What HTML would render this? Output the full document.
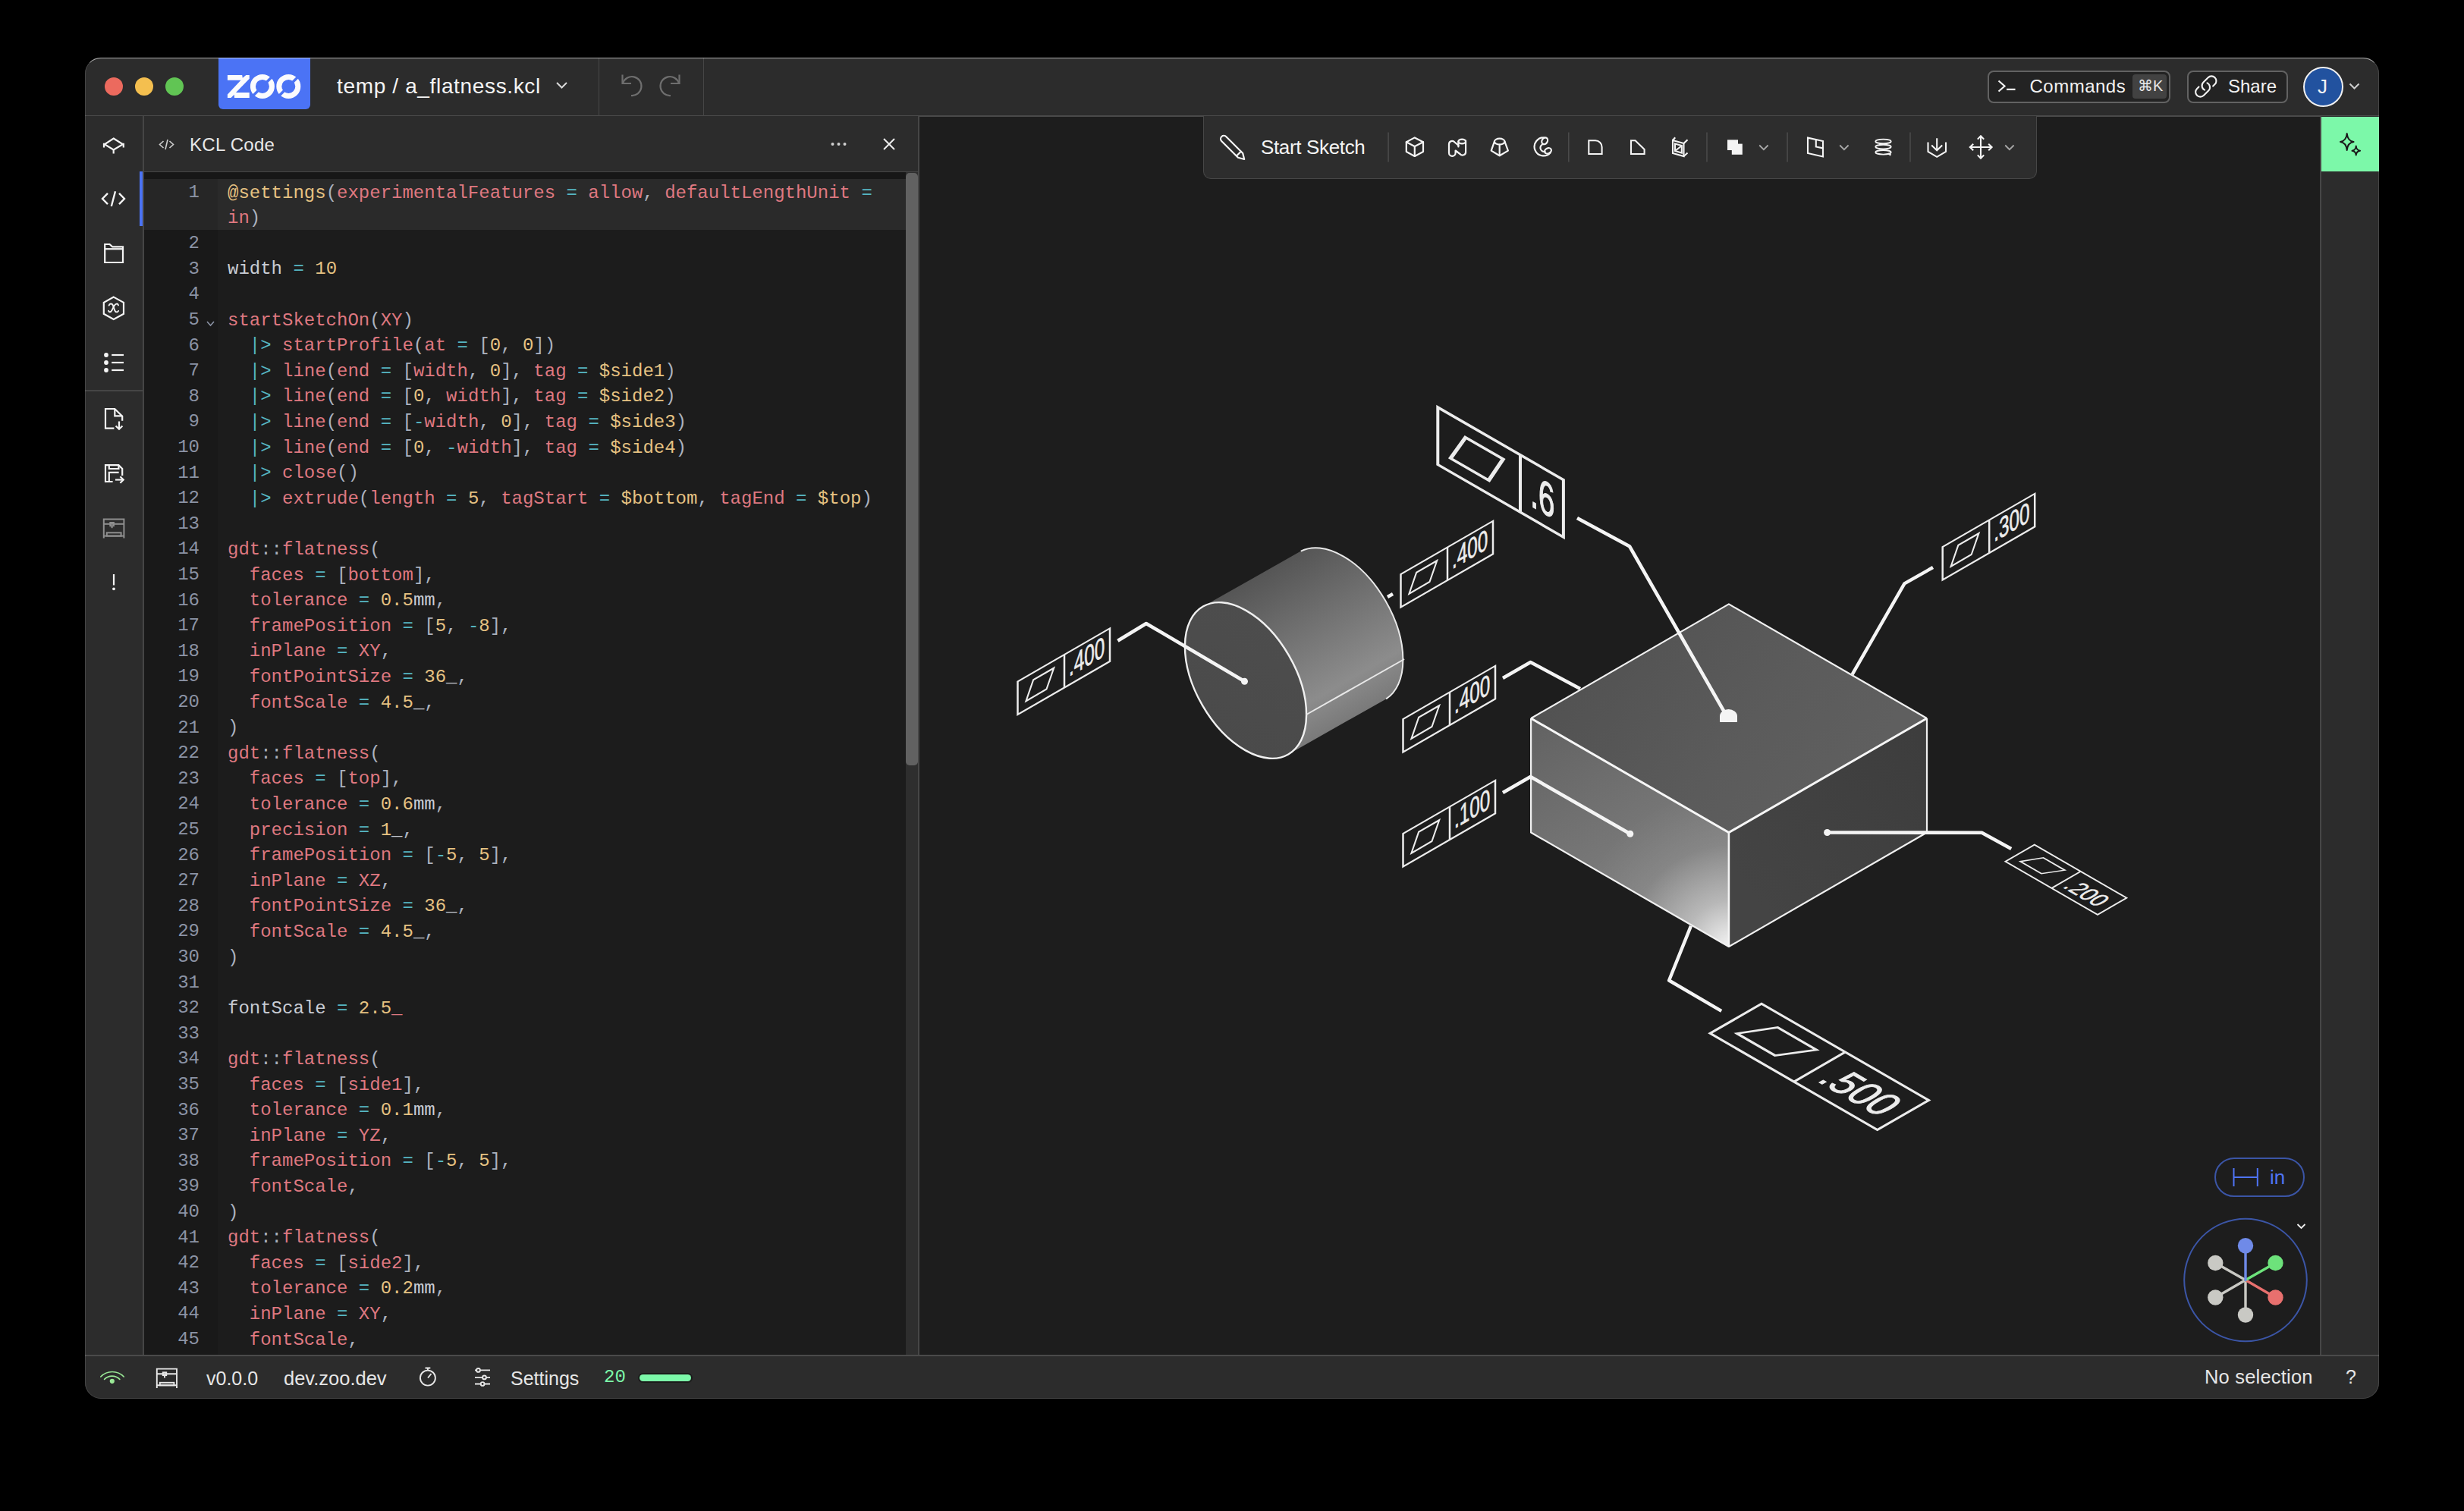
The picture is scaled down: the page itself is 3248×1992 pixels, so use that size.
<!DOCTYPE html>
<html><head><meta charset="utf-8">
<style>
*{box-sizing:border-box;margin:0;padding:0}
html,body{width:3248px;height:1992px;background:#000;overflow:hidden;font-family:"Liberation Sans",sans-serif}
.a{position:absolute}
#win{position:absolute;left:0;top:0;width:3248px;height:1992px;background:#2c2c2c;clip-path:inset(76px 112px 148.3px 112px round 21px)}
#winborder{position:absolute;left:112px;top:76px;width:3024px;height:1767.7px;border-radius:21px;border:1.5px solid rgba(255,255,255,0.13);border-top:1.8px solid rgba(255,255,255,0.62);pointer-events:none}
.t{position:absolute;white-space:pre;line-height:1}
svg{position:absolute;overflow:visible}
.ln{position:absolute;left:190px;width:73px;text-align:right;font:24px/33.6px "Liberation Mono",monospace;color:#8b93a5;white-space:pre}
.cl{position:absolute;left:300px;font:24px/33.6px "Liberation Mono",monospace;white-space:pre}
.ic{stroke:#f0f0f0;fill:none;stroke-width:2.2;stroke-linecap:round;stroke-linejoin:round}
</style></head><body>
<div id="win">
  <!-- ===== TITLE BAR ===== -->
  <div class="a" style="left:112px;top:76px;width:3024px;height:77px;background:#2c2c2c"></div>
  <div class="a" style="left:112px;top:152px;width:3024px;height:1.5px;background:#4a4a4a"></div>
  <!-- traffic lights -->
  <div class="a" style="left:138px;top:102px;width:24px;height:24px;border-radius:50%;background:#ec6a5e"></div>
  <div class="a" style="left:178px;top:102px;width:24px;height:24px;border-radius:50%;background:#f4bf4f"></div>
  <div class="a" style="left:218px;top:102px;width:24px;height:24px;border-radius:50%;background:#61c554"></div>
  <!-- zoo logo -->
  <div class="a" style="left:288px;top:76px;width:121px;height:68px;background:#4b73f5;border-radius:0 0 6px 6px"></div>
  <svg width="3248" height="1992" style="left:0;top:0">
    <polygon fill="#fbfbfd" points="299.9,99 319.2,99 319.8,102.7 324.3,99 328.75,99 328.75,103.8 311,122 328.75,122 328.75,129.1 309,129.1 308.7,124.8 304.4,129.1 299.9,129.1 299.9,124.5 317.5,105.8 299.9,105.8"/>
    <g fill="none" stroke="#fbfbfd" stroke-width="7">
      <circle cx="345.9" cy="113.9" r="12.5"/>
      <circle cx="380.3" cy="113.9" r="12.5"/>
    </g>
    <g stroke="#4b73f5" stroke-width="3.4">
      <line x1="333" y1="126.8" x2="358.8" y2="101"/>
      <line x1="367.4" y1="126.8" x2="393.2" y2="101"/>
    </g>
  </svg>
  <div class="t" style="left:444px;top:100px;font-size:28px;letter-spacing:0.65px;color:#f4f4f4">temp / a_flatness.kcl</div>
  <svg style="left:0;top:0" width="3248" height="1992">
    <polyline points="734,109 740.5,115.5 747,109" fill="none" stroke="#d8d8d8" stroke-width="2"/>
  </svg>
  <div class="a" style="left:788.5px;top:76px;width:1.5px;height:77px;background:#474747"></div>
  <div class="a" style="left:926.5px;top:76px;width:1.5px;height:77px;background:#474747"></div>
  <!-- undo / redo -->
  <svg style="left:0;top:0" width="3248" height="1992">
    <g fill="none" stroke="#6e6e6e" stroke-width="2.2" stroke-linecap="butt">
      <path d="M820.5,98.5 L820.5,110 L832,110"/>
      <path d="M821,110 A12.5,12.5 0 1 1 832,126"/>
      <path d="M895.5,98.5 L895.5,110 L884,110"/>
      <path d="M895,110 A12.5,12.5 0 1 0 884,126"/>
    </g>
  </svg>
  <!-- Commands / Share / avatar -->
  <div class="a" style="left:2620px;top:92.5px;width:241px;height:43.5px;border:2.2px solid #626262;border-radius:8px;background:#232323"></div>
  <svg style="left:0;top:0" width="3248" height="1992">
    <g fill="none" stroke="#f2f2f2" stroke-width="2.2">
      <polyline points="2634.5,106.5 2642.5,113.5 2634.5,120.5"/>
      <line x1="2645" y1="117.8" x2="2656.5" y2="117.8"/>
    </g>
  </svg>
  <div class="t" style="left:2675.5px;top:102px;font-size:24px;letter-spacing:0.5px;color:#f2f2f2">Commands</div>
  <div class="a" style="left:2811px;top:98px;width:45px;height:32px;border-radius:4px;background:#424242"></div>
  <div class="t" style="left:2818px;top:103px;font-size:20px;color:#e8e8e8">&#8984;K</div>
  <div class="a" style="left:2882.5px;top:92.5px;width:133px;height:43.5px;border:2.2px solid #626262;border-radius:8px;background:#232323"></div>
  <svg style="left:0;top:0" width="3248" height="1992">
    <g fill="none" stroke="#f2f2f2" stroke-width="2.2" stroke-linecap="round">
      <path transform="translate(2891,97.2) scale(1.4)" stroke-width="1.5" d="M13.19 8.688a4.5 4.5 0 0 1 1.242 7.244l-4.5 4.5a4.5 4.5 0 0 1-6.364-6.364l1.757-1.757m13.35-.622 1.757-1.757a4.5 4.5 0 0 0-6.364-6.364l-4.5 4.5a4.5 4.5 0 0 0 1.242 7.244"/>
    </g>
  </svg>
  <div class="t" style="left:2937px;top:102px;font-size:24px;letter-spacing:0px;color:#f2f2f2">Share</div>
  <div class="a" style="left:3035.5px;top:87.5px;width:53px;height:53px;border-radius:50%;background:#22529f;border:2px solid #f0f0f0"></div>
  <div class="t" style="left:3055px;top:101px;font-size:26px;color:#f4f4f4">J</div>
  <svg style="left:0;top:0" width="3248" height="1992">
    <polyline points="3097.5,110.5 3103.5,116.5 3109.5,110.5" fill="none" stroke="#cfcfcf" stroke-width="2"/>
  </svg>

  <!-- ===== LEFT SIDEBAR ===== -->
  <div class="a" style="left:112px;top:153px;width:77px;height:1634px;background:#2c2c2c"></div>
  <div class="a" style="left:188px;top:153px;width:2px;height:1634px;background:#454545"></div>
  <div class="a" style="left:112px;top:514px;width:76px;height:1.5px;background:#454545"></div>
  <div class="a" style="left:184px;top:226px;width:4px;height:72px;background:#4b73f5"></div>
  <svg width="3248" height="1992" style="left:0;top:0">
 <g fill="none" stroke="#f4f4f4" stroke-width="2.2" stroke-linejoin="miter" stroke-linecap="butt">
  <!-- diamond -->
  <polygon points="149.7,182.5 162,190.3 149.7,197.5 137.8,190.3"/>
  <line x1="137" y1="188.8" x2="137" y2="194.5"/><line x1="162.8" y1="188.8" x2="162.8" y2="194.5"/>
  <line x1="149.7" y1="197.5" x2="149.7" y2="202.5"/>
  <!-- code -->
  <polyline points="142,254.8 135,262 142,269.2" stroke-width="2.4"/>
  <polyline points="157,254.8 164,262 157,269.2" stroke-width="2.4"/>
  <line x1="152" y1="252.3" x2="146.8" y2="272" stroke-width="2.4"/>
  <!-- folder -->
  <path d="M138.2,346 V322 H144.5 L148.2,325.3 H162 V346 Z"/>
  <line x1="138.2" y1="328.2" x2="162" y2="328.2"/>
  <!-- hex -->
  <polygon points="149.8,391.6 163,398.9 163,413.8 149.8,421 136.8,413.8 136.8,398.9"/>
  <!-- list -->
  <line x1="147.2" y1="468" x2="163" y2="468"/><line x1="147.2" y1="478" x2="163" y2="478"/><line x1="147.2" y1="488" x2="163" y2="488"/>
  <!-- file down -->
  <path d="M150.4,564.6 H139 V539 H151.3 L161.2,548.8 V554.8"/>
  <path d="M151.3,539 V548.3 H161.2"/>
  <line x1="157" y1="555.5" x2="157" y2="565.5"/>
  <polyline points="152.6,561.5 157,565.8 161.4,561.5"/>
  <!-- save -->
  <path d="M148.6,635 H139 V613.2 H156.4 L161.2,618 V627"/>
  <path d="M143.8,613.2 V618 H156.4 V613.2"/>
  <path d="M143.8,635 V622.8 H156.6"/>
  <line x1="152" y1="632.5" x2="162.6" y2="632.5"/>
  <polyline points="158.4,628.2 162.7,632.5 158.4,636.8"/>
  <!-- printer grey -->
  <g stroke="#8e8e8e" stroke-width="2">
   <path d="M136.8,709.5 V684.5 H163.4 V709.5"/>
   <line x1="136.8" y1="690.8" x2="163.4" y2="690.8"/>
   <rect x="145.3" y="689" width="4.6" height="4.2"/>
   <line x1="147.6" y1="693.2" x2="147.6" y2="696.2"/>
   <rect x="140.8" y="702.3" width="18.8" height="4.3"/>
   <line x1="136.8" y1="706.6" x2="163.4" y2="706.6"/>
  </g>
 </g>
 <g fill="#f4f4f4">
  <circle cx="140" cy="468" r="2.9"/><circle cx="140" cy="478" r="2.9"/><circle cx="140" cy="488" r="2.9"/>
  <rect x="148.9" y="757" width="2.2" height="14.5"/><circle cx="150" cy="776.3" r="1.9"/>
 </g>
 <g fill="none" stroke="#f4f4f4" stroke-width="1.9" stroke-linecap="round">
  <path d="M143.6,402.6 Q145.2,399.6 147.6,400.9 Q148.6,401.6 149.3,403.6 L151.2,409.2 Q152.2,411.9 154.6,411.3 Q155.6,410.9 156.1,409.9"/>
  <path d="M156,402.4 Q155.3,400.3 153.6,400.6 Q152.2,400.9 150.7,402.8 L147.6,408.9 Q145.9,411.8 144.2,411.2 Q143.2,410.8 143.1,409.6"/>
 </g>
</svg>


  <!-- ===== KCL PANEL ===== -->
  <div class="a" style="left:190px;top:153px;width:1021px;height:74px;background:#2c2c2c"></div>
  <div class="a" style="left:190px;top:225.5px;width:1021px;height:1.5px;background:#474747"></div>
  <svg style="left:0;top:0" width="3248" height="1992">
    <g fill="none" stroke="#cfcfcf" stroke-width="1.6">
      <polyline points="215.5,186 210.5,190.5 215.5,195"/>
      <polyline points="223.5,186 228.5,190.5 223.5,195"/>
      <line x1="221" y1="184" x2="218" y2="197"/>
    </g>
  </svg>
  <div class="t" style="left:250px;top:178.5px;font-size:24px;letter-spacing:0.3px;color:#e8e8e8">KCL Code</div>
  <svg style="left:0;top:0" width="3248" height="1992">
    <g fill="#cfcfcf"><circle cx="1097.5" cy="190" r="2"/><circle cx="1105.5" cy="190" r="2"/><circle cx="1113.5" cy="190" r="2"/></g>
    <g stroke="#f0f0f0" stroke-width="2"><line x1="1165" y1="183" x2="1179" y2="197"/><line x1="1179" y1="183" x2="1165" y2="197"/></g>
  </svg>
  <!-- editor -->
  <div class="a" style="left:190px;top:227px;width:1020px;height:1560px;background:#1c1c1c"></div>
  <div class="a" style="left:190px;top:227px;width:97px;height:1560px;background:#191919"></div>
  <div class="a" style="left:190px;top:227px;width:1004px;height:9px;background:#171717"></div>
  <div class="a" style="left:190px;top:236px;width:1004px;height:67.2px;background:#2a2a2a"></div>
  <div class="a" style="left:190px;top:236px;width:97px;height:67.2px;background:#262626"></div>
  <div class="a" style="left:1194px;top:227px;width:16px;height:1560px;background:#2e2e2e"></div>
  <div class="a" style="left:1194px;top:228px;width:15.5px;height:781px;background:#616161;border-radius:5px"></div>
  <div class="a" style="left:1209.5px;top:153px;width:2px;height:1634px;background:#464646"></div>
  <svg style="left:0;top:0" width="3248" height="1992">
    <polyline points="273,424 277.5,429 282,424" fill="none" stroke="#8b93a5" stroke-width="1.6"/>
  </svg>
  <div class="ln" style="top:237.0px">1</div>
<div class="cl" style="top:237.5px"><span style="color:#e6c282">@settings</span><span style="color:#abb2bf">(</span><span style="color:#df7880">experimentalFeatures</span><span style="color:#abb2bf"> </span><span style="color:#56b6c2">=</span><span style="color:#abb2bf"> </span><span style="color:#df7880">allow</span><span style="color:#abb2bf">, </span><span style="color:#df7880">defaultLengthUnit</span><span style="color:#abb2bf"> </span><span style="color:#56b6c2">=</span></div>
<div class="ln" style="top:304.2px">2</div>
<div class="ln" style="top:337.8px">3</div>
<div class="cl" style="top:338.3px"><span style="color:#c8ccd4">width</span><span style="color:#abb2bf"> </span><span style="color:#56b6c2">=</span><span style="color:#abb2bf"> </span><span style="color:#e6c282">10</span></div>
<div class="ln" style="top:371.4px">4</div>
<div class="ln" style="top:405.0px">5</div>
<div class="cl" style="top:405.5px"><span style="color:#df7880">startSketchOn</span><span style="color:#abb2bf">(</span><span style="color:#df7880">XY</span><span style="color:#abb2bf">)</span></div>
<div class="ln" style="top:438.6px">6</div>
<div class="cl" style="top:439.1px"><span style="color:#abb2bf">  </span><span style="color:#56b6c2">|&gt;</span><span style="color:#abb2bf"> </span><span style="color:#df7880">startProfile</span><span style="color:#abb2bf">(</span><span style="color:#df7880">at</span><span style="color:#abb2bf"> </span><span style="color:#56b6c2">=</span><span style="color:#abb2bf"> [</span><span style="color:#e6c282">0</span><span style="color:#abb2bf">, </span><span style="color:#e6c282">0</span><span style="color:#abb2bf">])</span></div>
<div class="ln" style="top:472.2px">7</div>
<div class="cl" style="top:472.7px"><span style="color:#abb2bf">  </span><span style="color:#56b6c2">|&gt;</span><span style="color:#abb2bf"> </span><span style="color:#df7880">line</span><span style="color:#abb2bf">(</span><span style="color:#df7880">end</span><span style="color:#abb2bf"> </span><span style="color:#56b6c2">=</span><span style="color:#abb2bf"> [</span><span style="color:#df7880">width</span><span style="color:#abb2bf">, </span><span style="color:#e6c282">0</span><span style="color:#abb2bf">], </span><span style="color:#df7880">tag</span><span style="color:#abb2bf"> </span><span style="color:#56b6c2">=</span><span style="color:#abb2bf"> </span><span style="color:#e6c282">$side1</span><span style="color:#abb2bf">)</span></div>
<div class="ln" style="top:505.8px">8</div>
<div class="cl" style="top:506.3px"><span style="color:#abb2bf">  </span><span style="color:#56b6c2">|&gt;</span><span style="color:#abb2bf"> </span><span style="color:#df7880">line</span><span style="color:#abb2bf">(</span><span style="color:#df7880">end</span><span style="color:#abb2bf"> </span><span style="color:#56b6c2">=</span><span style="color:#abb2bf"> [</span><span style="color:#e6c282">0</span><span style="color:#abb2bf">, </span><span style="color:#df7880">width</span><span style="color:#abb2bf">], </span><span style="color:#df7880">tag</span><span style="color:#abb2bf"> </span><span style="color:#56b6c2">=</span><span style="color:#abb2bf"> </span><span style="color:#e6c282">$side2</span><span style="color:#abb2bf">)</span></div>
<div class="ln" style="top:539.4px">9</div>
<div class="cl" style="top:539.9px"><span style="color:#abb2bf">  </span><span style="color:#56b6c2">|&gt;</span><span style="color:#abb2bf"> </span><span style="color:#df7880">line</span><span style="color:#abb2bf">(</span><span style="color:#df7880">end</span><span style="color:#abb2bf"> </span><span style="color:#56b6c2">=</span><span style="color:#abb2bf"> [</span><span style="color:#56b6c2">-</span><span style="color:#df7880">width</span><span style="color:#abb2bf">, </span><span style="color:#e6c282">0</span><span style="color:#abb2bf">], </span><span style="color:#df7880">tag</span><span style="color:#abb2bf"> </span><span style="color:#56b6c2">=</span><span style="color:#abb2bf"> </span><span style="color:#e6c282">$side3</span><span style="color:#abb2bf">)</span></div>
<div class="ln" style="top:573.0px">10</div>
<div class="cl" style="top:573.5px"><span style="color:#abb2bf">  </span><span style="color:#56b6c2">|&gt;</span><span style="color:#abb2bf"> </span><span style="color:#df7880">line</span><span style="color:#abb2bf">(</span><span style="color:#df7880">end</span><span style="color:#abb2bf"> </span><span style="color:#56b6c2">=</span><span style="color:#abb2bf"> [</span><span style="color:#e6c282">0</span><span style="color:#abb2bf">, </span><span style="color:#56b6c2">-</span><span style="color:#df7880">width</span><span style="color:#abb2bf">], </span><span style="color:#df7880">tag</span><span style="color:#abb2bf"> </span><span style="color:#56b6c2">=</span><span style="color:#abb2bf"> </span><span style="color:#e6c282">$side4</span><span style="color:#abb2bf">)</span></div>
<div class="ln" style="top:606.6px">11</div>
<div class="cl" style="top:607.1px"><span style="color:#abb2bf">  </span><span style="color:#56b6c2">|&gt;</span><span style="color:#abb2bf"> </span><span style="color:#df7880">close</span><span style="color:#abb2bf">()</span></div>
<div class="ln" style="top:640.2px">12</div>
<div class="cl" style="top:640.7px"><span style="color:#abb2bf">  </span><span style="color:#56b6c2">|&gt;</span><span style="color:#abb2bf"> </span><span style="color:#df7880">extrude</span><span style="color:#abb2bf">(</span><span style="color:#df7880">length</span><span style="color:#abb2bf"> </span><span style="color:#56b6c2">=</span><span style="color:#abb2bf"> </span><span style="color:#e6c282">5</span><span style="color:#abb2bf">, </span><span style="color:#df7880">tagStart</span><span style="color:#abb2bf"> </span><span style="color:#56b6c2">=</span><span style="color:#abb2bf"> </span><span style="color:#e6c282">$bottom</span><span style="color:#abb2bf">, </span><span style="color:#df7880">tagEnd</span><span style="color:#abb2bf"> </span><span style="color:#56b6c2">=</span><span style="color:#abb2bf"> </span><span style="color:#e6c282">$top</span><span style="color:#abb2bf">)</span></div>
<div class="ln" style="top:673.8px">13</div>
<div class="ln" style="top:707.4px">14</div>
<div class="cl" style="top:707.9px"><span style="color:#df7880">gdt</span><span style="color:#abb2bf">::</span><span style="color:#df7880">flatness</span><span style="color:#abb2bf">(</span></div>
<div class="ln" style="top:741.0px">15</div>
<div class="cl" style="top:741.5px"><span style="color:#df7880">  faces</span><span style="color:#abb2bf"> </span><span style="color:#56b6c2">=</span><span style="color:#abb2bf"> </span><span style="color:#abb2bf">[</span><span style="color:#df7880">bottom</span><span style="color:#abb2bf">]</span><span style="color:#abb2bf">,</span></div>
<div class="ln" style="top:774.6px">16</div>
<div class="cl" style="top:775.1px"><span style="color:#df7880">  tolerance</span><span style="color:#abb2bf"> </span><span style="color:#56b6c2">=</span><span style="color:#abb2bf"> </span><span style="color:#e6c282">0.5</span><span style="color:#c8ccd4">mm</span><span style="color:#abb2bf">,</span></div>
<div class="ln" style="top:808.2px">17</div>
<div class="cl" style="top:808.7px"><span style="color:#df7880">  framePosition</span><span style="color:#abb2bf"> </span><span style="color:#56b6c2">=</span><span style="color:#abb2bf"> </span><span style="color:#abb2bf">[</span><span style="color:#e6c282">5</span><span style="color:#abb2bf">, </span><span style="color:#56b6c2">-</span><span style="color:#e6c282">8</span><span style="color:#abb2bf">]</span><span style="color:#abb2bf">,</span></div>
<div class="ln" style="top:841.8px">18</div>
<div class="cl" style="top:842.3px"><span style="color:#df7880">  inPlane</span><span style="color:#abb2bf"> </span><span style="color:#56b6c2">=</span><span style="color:#abb2bf"> </span><span style="color:#df7880">XY</span><span style="color:#abb2bf">,</span></div>
<div class="ln" style="top:875.4px">19</div>
<div class="cl" style="top:875.9px"><span style="color:#df7880">  fontPointSize</span><span style="color:#abb2bf"> </span><span style="color:#56b6c2">=</span><span style="color:#abb2bf"> </span><span style="color:#e6c282">36</span><span style="color:#c8ccd4">_</span><span style="color:#abb2bf">,</span></div>
<div class="ln" style="top:909.0px">20</div>
<div class="cl" style="top:909.5px"><span style="color:#df7880">  fontScale</span><span style="color:#abb2bf"> </span><span style="color:#56b6c2">=</span><span style="color:#abb2bf"> </span><span style="color:#e6c282">4.5</span><span style="color:#c8ccd4">_</span><span style="color:#abb2bf">,</span></div>
<div class="ln" style="top:942.6px">21</div>
<div class="cl" style="top:943.1px"><span style="color:#abb2bf">)</span></div>
<div class="ln" style="top:976.2px">22</div>
<div class="cl" style="top:976.7px"><span style="color:#df7880">gdt</span><span style="color:#abb2bf">::</span><span style="color:#df7880">flatness</span><span style="color:#abb2bf">(</span></div>
<div class="ln" style="top:1009.8px">23</div>
<div class="cl" style="top:1010.3px"><span style="color:#df7880">  faces</span><span style="color:#abb2bf"> </span><span style="color:#56b6c2">=</span><span style="color:#abb2bf"> </span><span style="color:#abb2bf">[</span><span style="color:#df7880">top</span><span style="color:#abb2bf">]</span><span style="color:#abb2bf">,</span></div>
<div class="ln" style="top:1043.4px">24</div>
<div class="cl" style="top:1043.9px"><span style="color:#df7880">  tolerance</span><span style="color:#abb2bf"> </span><span style="color:#56b6c2">=</span><span style="color:#abb2bf"> </span><span style="color:#e6c282">0.6</span><span style="color:#c8ccd4">mm</span><span style="color:#abb2bf">,</span></div>
<div class="ln" style="top:1077.0px">25</div>
<div class="cl" style="top:1077.5px"><span style="color:#df7880">  precision</span><span style="color:#abb2bf"> </span><span style="color:#56b6c2">=</span><span style="color:#abb2bf"> </span><span style="color:#e6c282">1</span><span style="color:#c8ccd4">_</span><span style="color:#abb2bf">,</span></div>
<div class="ln" style="top:1110.6px">26</div>
<div class="cl" style="top:1111.1px"><span style="color:#df7880">  framePosition</span><span style="color:#abb2bf"> </span><span style="color:#56b6c2">=</span><span style="color:#abb2bf"> </span><span style="color:#abb2bf">[</span><span style="color:#56b6c2">-</span><span style="color:#e6c282">5</span><span style="color:#abb2bf">, </span><span style="color:#e6c282">5</span><span style="color:#abb2bf">]</span><span style="color:#abb2bf">,</span></div>
<div class="ln" style="top:1144.2px">27</div>
<div class="cl" style="top:1144.7px"><span style="color:#df7880">  inPlane</span><span style="color:#abb2bf"> </span><span style="color:#56b6c2">=</span><span style="color:#abb2bf"> </span><span style="color:#df7880">XZ</span><span style="color:#abb2bf">,</span></div>
<div class="ln" style="top:1177.8px">28</div>
<div class="cl" style="top:1178.3px"><span style="color:#df7880">  fontPointSize</span><span style="color:#abb2bf"> </span><span style="color:#56b6c2">=</span><span style="color:#abb2bf"> </span><span style="color:#e6c282">36</span><span style="color:#c8ccd4">_</span><span style="color:#abb2bf">,</span></div>
<div class="ln" style="top:1211.4px">29</div>
<div class="cl" style="top:1211.9px"><span style="color:#df7880">  fontScale</span><span style="color:#abb2bf"> </span><span style="color:#56b6c2">=</span><span style="color:#abb2bf"> </span><span style="color:#e6c282">4.5</span><span style="color:#c8ccd4">_</span><span style="color:#abb2bf">,</span></div>
<div class="ln" style="top:1245.0px">30</div>
<div class="cl" style="top:1245.5px"><span style="color:#abb2bf">)</span></div>
<div class="ln" style="top:1278.6px">31</div>
<div class="ln" style="top:1312.2px">32</div>
<div class="cl" style="top:1312.7px"><span style="color:#c8ccd4">fontScale</span><span style="color:#abb2bf"> </span><span style="color:#56b6c2">=</span><span style="color:#abb2bf"> </span><span style="color:#e6c282">2.5</span><span style="color:#df7880">_</span></div>
<div class="ln" style="top:1345.8px">33</div>
<div class="ln" style="top:1379.4px">34</div>
<div class="cl" style="top:1379.9px"><span style="color:#df7880">gdt</span><span style="color:#abb2bf">::</span><span style="color:#df7880">flatness</span><span style="color:#abb2bf">(</span></div>
<div class="ln" style="top:1413.0px">35</div>
<div class="cl" style="top:1413.5px"><span style="color:#df7880">  faces</span><span style="color:#abb2bf"> </span><span style="color:#56b6c2">=</span><span style="color:#abb2bf"> </span><span style="color:#abb2bf">[</span><span style="color:#df7880">side1</span><span style="color:#abb2bf">]</span><span style="color:#abb2bf">,</span></div>
<div class="ln" style="top:1446.6px">36</div>
<div class="cl" style="top:1447.1px"><span style="color:#df7880">  tolerance</span><span style="color:#abb2bf"> </span><span style="color:#56b6c2">=</span><span style="color:#abb2bf"> </span><span style="color:#e6c282">0.1</span><span style="color:#c8ccd4">mm</span><span style="color:#abb2bf">,</span></div>
<div class="ln" style="top:1480.2px">37</div>
<div class="cl" style="top:1480.7px"><span style="color:#df7880">  inPlane</span><span style="color:#abb2bf"> </span><span style="color:#56b6c2">=</span><span style="color:#abb2bf"> </span><span style="color:#df7880">YZ</span><span style="color:#abb2bf">,</span></div>
<div class="ln" style="top:1513.8px">38</div>
<div class="cl" style="top:1514.3px"><span style="color:#df7880">  framePosition</span><span style="color:#abb2bf"> </span><span style="color:#56b6c2">=</span><span style="color:#abb2bf"> </span><span style="color:#abb2bf">[</span><span style="color:#56b6c2">-</span><span style="color:#e6c282">5</span><span style="color:#abb2bf">, </span><span style="color:#e6c282">5</span><span style="color:#abb2bf">]</span><span style="color:#abb2bf">,</span></div>
<div class="ln" style="top:1547.4px">39</div>
<div class="cl" style="top:1547.9px"><span style="color:#df7880">  fontScale</span><span style="color:#abb2bf">,</span></div>
<div class="ln" style="top:1581.0px">40</div>
<div class="cl" style="top:1581.5px"><span style="color:#abb2bf">)</span></div>
<div class="ln" style="top:1614.6px">41</div>
<div class="cl" style="top:1615.1px"><span style="color:#df7880">gdt</span><span style="color:#abb2bf">::</span><span style="color:#df7880">flatness</span><span style="color:#abb2bf">(</span></div>
<div class="ln" style="top:1648.2px">42</div>
<div class="cl" style="top:1648.7px"><span style="color:#df7880">  faces</span><span style="color:#abb2bf"> </span><span style="color:#56b6c2">=</span><span style="color:#abb2bf"> </span><span style="color:#abb2bf">[</span><span style="color:#df7880">side2</span><span style="color:#abb2bf">]</span><span style="color:#abb2bf">,</span></div>
<div class="ln" style="top:1681.8px">43</div>
<div class="cl" style="top:1682.3px"><span style="color:#df7880">  tolerance</span><span style="color:#abb2bf"> </span><span style="color:#56b6c2">=</span><span style="color:#abb2bf"> </span><span style="color:#e6c282">0.2</span><span style="color:#c8ccd4">mm</span><span style="color:#abb2bf">,</span></div>
<div class="ln" style="top:1715.4px">44</div>
<div class="cl" style="top:1715.9px"><span style="color:#df7880">  inPlane</span><span style="color:#abb2bf"> </span><span style="color:#56b6c2">=</span><span style="color:#abb2bf"> </span><span style="color:#df7880">XY</span><span style="color:#abb2bf">,</span></div>
<div class="ln" style="top:1749.0px">45</div>
<div class="cl" style="top:1749.5px"><span style="color:#df7880">  fontScale</span><span style="color:#abb2bf">,</span></div>
<div class="cl" style="top:271.1px"><span style="color:#df7880">in</span><span style="color:#abb2bf">)</span></div>

  <!-- ===== VIEWPORT ===== -->
  <div class="a" style="left:1211.5px;top:153.5px;width:1847.5px;height:1633.5px;background:#1d1d1d"></div>
  <div class="a" style="left:1585.5px;top:153px;width:1099.5px;height:82.5px;background:#2d2d2d;border:1.5px solid #474747;border-top:none;border-radius:0 0 10px 10px"></div>
<div class="t" style="left:1662px;top:181px;font-size:26px;letter-spacing:-0.35px;color:#f4f4f4">Start Sketch</div>
<svg width="3248" height="1992" style="left:0;top:0">
 <g fill="#4a4a4a"><rect x="1829.3" y="174.5" width="1.6" height="39"/><rect x="2067" y="174.5" width="1.6" height="39"/><rect x="2249.2" y="174.5" width="1.6" height="39"/><rect x="2355.3" y="174.5" width="1.6" height="39"/><rect x="2517.2" y="174.5" width="1.6" height="39"/></g>
 <g fill="none" stroke="#f4f4f4" stroke-width="2.2" stroke-linejoin="round" stroke-linecap="round">
  <!-- pencil -->
  <path d="M1616.4,180.2 L1638.2,202 L1640.2,210 L1632,207.7 L1610.2,186 A4.1,4.1 0 0 1 1616.4,180.2 Z"/>
  <line x1="1630.5" y1="205" x2="1635.8" y2="199.7"/>
  <!-- cube -->
  <polygon points="1864.8,181.4 1876,187.2 1876,200 1864.8,206 1853.8,200 1853.8,187.2"/>
  <polyline points="1853.8,187.2 1864.8,193 1876,187.2"/><line x1="1864.8" y1="193" x2="1864.8" y2="206"/>
  <!-- sweep -->
  <path d="M1910,190 a4.2,4.2 0 0 1 7.5,-2.5 l5,4.2 M1910,190 v11.5 a4.3,4.3 0 0 0 8.6,0 v-3 l6,4.5 a4.2,4.2 0 0 0 7.5,-3 v-14.5"/>
  <ellipse cx="1927.2" cy="186.5" rx="4.8" ry="2.8"/>
  <line x1="1922.4" y1="186.5" x2="1922.4" y2="193.5"/>
  <!-- loft -->
  <ellipse cx="1976.7" cy="186.6" rx="6.8" ry="3.9"/>
  <polyline points="1969.9,186.6 1965.7,198.6 1976.7,205.2 1987.9,198.6 1983.5,186.6"/>
  <line x1="1976.7" y1="190.5" x2="1976.7" y2="205.2"/>
  <!-- revolve -->
  <path d="M2036,181.5 A12,12 0 1 0 2043.5,201.5"/>
  <path d="M2034.5,190 A5,5 0 0 0 2036.5,199.8"/>
  <ellipse cx="2036.2" cy="185.8" rx="3.6" ry="4.6" transform="rotate(30 2036.2 185.8)"/>
  <ellipse cx="2040.5" cy="198.8" rx="4.6" ry="3.4" transform="rotate(-25 2040.5 198.8)"/>
 </g>
 <g fill="none" stroke="#f4f4f4" stroke-width="2.1" stroke-linejoin="miter">
  <!-- fillet -->
  <path d="M2094.3,203 V185.3 H2103 A8.6,8.6 0 0 1 2111.6,193.9 V203 Z"/>
  <!-- chamfer -->
  <path d="M2150,203 V185.3 H2155.6 L2167.6,197 V203 Z"/>
  <!-- shell -->
  <path d="M2205,185 L2219.5,189 V206 L2205,202 Z"/>
  <path d="M2208,189.5 L2216.8,192 V201.5 L2208,199 Z"/>
  <line x1="2208.5" y1="198.5" x2="2216.5" y2="192.5"/>
  <line x1="2205" y1="185" x2="2208.2" y2="181.2"/><line x1="2219.5" y1="189" x2="2224.5" y2="184.2"/><line x1="2219.5" y1="206" x2="2224.5" y2="201.5"/>
  <!-- plane -->
  <path d="M2383,181.6 L2403,186 V206.5 L2383,202 Z"/>
  <path d="M2393.8,183.8 V193.5 L2403,195.4"/>
  <!-- helix -->
  <ellipse cx="2482.5" cy="186.4" rx="10.2" ry="2.8" stroke-width="1.9"/>
  <ellipse cx="2482.5" cy="193.6" rx="10.2" ry="2.8" stroke-width="1.9"/>
  <ellipse cx="2482.5" cy="200.8" rx="10.2" ry="2.8" stroke-width="1.9"/>
  <line x1="2489" y1="202.5" x2="2492.5" y2="204.5"/>
  <!-- import -->
  <polyline points="2541.5,187.5 2541.5,200 2553.2,206.8 2565,200 2565,187.5"/>
  <line x1="2553.2" y1="182.3" x2="2553.2" y2="198"/>
  <polyline points="2546.2,191.4 2553.2,198.2 2560.2,191.4"/>
  <!-- move -->
  <line x1="2596.8" y1="194" x2="2625.6" y2="194"/><line x1="2611" y1="179.2" x2="2611" y2="208.8"/>
  <polyline points="2601.2,189.8 2596.8,194 2601.2,198.2"/><polyline points="2621.2,189.8 2625.6,194 2621.2,198.2"/>
  <polyline points="2606.8,183.6 2611,179.2 2615.2,183.6"/><polyline points="2606.8,204.4 2611,208.8 2615.2,204.4"/>
 </g>
 <g fill="#f4f4f4"><rect x="2277" y="184.3" width="14" height="13.7"/><rect x="2282.8" y="189.6" width="14" height="14.2"/></g>
 <g fill="none" stroke="#a8a8a8" stroke-width="1.8">
  <polyline points="2319.2,191.5 2324.9,197.2 2330.6,191.5"/>
  <polyline points="2425.2,191.5 2430.9,197.2 2436.6,191.5"/>
  <polyline points="2643.2,191.5 2648.9,197.2 2654.6,191.5"/>
 </g>
</svg>

  <svg width="3248" height="1992" style="left:0;top:0">
<defs>
<linearGradient id="gTop" gradientUnits="userSpaceOnUse" x1="2100" y1="850" x2="2400" y2="1080">
 <stop offset="0" stop-color="#525252"/><stop offset="0.6" stop-color="#5b5b5b"/><stop offset="1" stop-color="#5f5f5f"/></linearGradient>
<linearGradient id="gLeft" gradientUnits="userSpaceOnUse" x1="2060" y1="930" x2="2250" y2="1260">
 <stop offset="0" stop-color="#626262"/><stop offset="0.45" stop-color="#747474"/><stop offset="1" stop-color="#8a8a8a"/></linearGradient>
<radialGradient id="gLeftHi" gradientUnits="userSpaceOnUse" cx="2282" cy="1250" r="210">
 <stop offset="0" stop-color="#ffffff" stop-opacity="0.92"/><stop offset="0.3" stop-color="#ffffff" stop-opacity="0.42"/><stop offset="0.65" stop-color="#ffffff" stop-opacity="0.07"/><stop offset="1" stop-color="#ffffff" stop-opacity="0"/></radialGradient>
<linearGradient id="gRight" gradientUnits="userSpaceOnUse" x1="2290" y1="1150" x2="2540" y2="980">
 <stop offset="0" stop-color="#444444"/><stop offset="0.6" stop-color="#404040"/><stop offset="1" stop-color="#3d3d3d"/></linearGradient>
<linearGradient id="gCylSide" gradientUnits="userSpaceOnUse" x1="1645" y1="765" x2="1757" y2="960">
 <stop offset="0" stop-color="#555555"/><stop offset="0.45" stop-color="#747474"/><stop offset="0.8" stop-color="#8c8c8c"/><stop offset="1" stop-color="#7a7a7a"/></linearGradient>
<linearGradient id="gCylFront" gradientUnits="userSpaceOnUse" x1="1580" y1="820" x2="1700" y2="980">
 <stop offset="0" stop-color="#4d4d4d"/><stop offset="1" stop-color="#4a4a4a"/></linearGradient>
</defs>
<g fill="none" stroke="#f4f4f4" stroke-width="4.4" stroke-linejoin="round">
<polyline points="1981,894 2017.5,873 2083,908"/>
<polyline points="2548,748 2510.4,769.4 2441.6,889.1"/>
<polyline points="2229,1220.6 2200.1,1292.5 2269.2,1332.8"/>
<polyline points="1829,787 1836,783"/>
</g>
<polygon points="2278.9,796.4 2540,947 2278.9,1097.5 2018.1,947" fill="url(#gTop)"/>
<polygon points="2018.1,947 2278.9,1097.5 2278.9,1248 2018.1,1097.5" fill="url(#gLeft)"/>
<polygon points="2018.1,947 2278.9,1097.5 2278.9,1248 2018.1,1097.5" fill="url(#gLeftHi)"/>
<polygon points="2278.9,1097.5 2540,947 2540,1097.5 2278.9,1248" fill="url(#gRight)"/>
<g fill="none" stroke="#f0f0f0" stroke-width="2.2" stroke-linejoin="round">
<polyline points="2018.1,947 2278.9,796.4 2540,947"/>
<polyline points="2018.1,947 2018.1,1097.5 2278.9,1248 2540,1097.5 2540,947"/>
</g>
<polyline points="2018.1,947 2278.9,1097.5 2540,947" fill="none" stroke="#f6f6f6" stroke-width="3"/>
<line x1="2278.9" y1="1097.5" x2="2278.9" y2="1248" stroke="#f6f6f6" stroke-width="2.6"/>
<path d="M1585.8,799.6 L1714.8,726.6 A112.5,65.8 60 0 1 1827.2,921.4 L1698.2,994.4 A112.5,65.8 60 0 0 1585.8,799.6 Z" fill="url(#gCylSide)"/>
<path d="M1714.8,726.6 A112.5,65.8 60 0 1 1827.2,921.4" fill="none" stroke="#e8e8e8" stroke-width="2"/>
<ellipse cx="1642" cy="897" rx="112.5" ry="65.8" transform="rotate(60 1642 897)" fill="url(#gCylFront)" stroke="#f0f0f0" stroke-width="2.4"/>
<line x1="1722.1" y1="942.0" x2="1851.1" y2="869.0" stroke="#e8e8e8" stroke-width="2"/>
<g fill="none" stroke="#f4f4f4" stroke-width="4.6" stroke-linejoin="round">
<polyline points="1473.4,844.8 1510.9,822 1640.5,898.2"/>
<polyline points="2079,683 2148,720.2 2273,938.7"/>
<polyline points="1981,1045 2017.5,1024 2148.8,1099.2"/>
<polyline points="2651.2,1118.9 2612.4,1097.7 2408.6,1097.5"/>
</g>
<g fill="#f4f4f4"><circle cx="1640.5" cy="898.2" r="4.5"/><circle cx="2148.8" cy="1099.2" r="4.5"/><circle cx="2408.6" cy="1097.5" r="4.5"/>
<path d="M2267,952 L2267,944 A9,7 0 0 1 2290,944 L2290,952 Z"/></g>
<g transform="matrix(1,-0.57735,0,1,1341.5,898.5)">
<rect x="0" y="0" width="121.5" height="43.5" fill="none" stroke="#ececec" stroke-width="2.5"/>
<line x1="61.5" y1="0" x2="61.5" y2="43.5" stroke="#ececec" stroke-width="2.5"/>
<polygon points="11,32 38,32 47.7,9.7 20.6,9.7" fill="none" stroke="#ececec" stroke-width="2.5" stroke-linejoin="miter"/>
<text x="0" y="0" transform="translate(67.5,32.5) scale(0.64,1)" font-family="Liberation Sans" font-size="38" fill="#ececec" stroke="#ececec" stroke-width="0.7">.400</text>
</g>
<g transform="matrix(1,-0.57735,0,1,1846.5,757)">
<rect x="0" y="0" width="121.5" height="43.5" fill="none" stroke="#ececec" stroke-width="2.5"/>
<line x1="61.5" y1="0" x2="61.5" y2="43.5" stroke="#ececec" stroke-width="2.5"/>
<polygon points="11,32 38,32 47.7,9.7 20.6,9.7" fill="none" stroke="#ececec" stroke-width="2.5" stroke-linejoin="miter"/>
<text x="0" y="0" transform="translate(67.5,32.5) scale(0.64,1)" font-family="Liberation Sans" font-size="38" fill="#ececec" stroke="#ececec" stroke-width="0.7">.400</text>
</g>
<g transform="matrix(1,-0.57735,0,1,1849.5,948)">
<rect x="0" y="0" width="121.5" height="43.5" fill="none" stroke="#ececec" stroke-width="2.5"/>
<line x1="61.5" y1="0" x2="61.5" y2="43.5" stroke="#ececec" stroke-width="2.5"/>
<polygon points="11,32 38,32 47.7,9.7 20.6,9.7" fill="none" stroke="#ececec" stroke-width="2.5" stroke-linejoin="miter"/>
<text x="0" y="0" transform="translate(67.5,32.5) scale(0.64,1)" font-family="Liberation Sans" font-size="38" fill="#ececec" stroke="#ececec" stroke-width="0.7">.400</text>
</g>
<g transform="matrix(1,-0.57735,0,1,1849.5,1099)">
<rect x="0" y="0" width="121.5" height="43.5" fill="none" stroke="#ececec" stroke-width="2.5"/>
<line x1="61.5" y1="0" x2="61.5" y2="43.5" stroke="#ececec" stroke-width="2.5"/>
<polygon points="11,32 38,32 47.7,9.7 20.6,9.7" fill="none" stroke="#ececec" stroke-width="2.5" stroke-linejoin="miter"/>
<text x="0" y="0" transform="translate(67.5,32.5) scale(0.64,1)" font-family="Liberation Sans" font-size="38" fill="#ececec" stroke="#ececec" stroke-width="0.7">.100</text>
</g>
<g transform="matrix(1,-0.57735,0,1,2560.7,721)">
<rect x="0" y="0" width="121.5" height="43.5" fill="none" stroke="#ececec" stroke-width="2.5"/>
<line x1="61.5" y1="0" x2="61.5" y2="43.5" stroke="#ececec" stroke-width="2.5"/>
<polygon points="11,32 38,32 47.7,9.7 20.6,9.7" fill="none" stroke="#ececec" stroke-width="2.5" stroke-linejoin="miter"/>
<text x="0" y="0" transform="translate(67.5,32.5) scale(0.64,1)" font-family="Liberation Sans" font-size="38" fill="#ececec" stroke="#ececec" stroke-width="0.7">.300</text>
</g>
<g transform="matrix(1,0.57735,0,1,1895.3,537)">
<rect x="0" y="0" width="165.6" height="75.5" fill="none" stroke="#ececec" stroke-width="4"/>
<line x1="108.7" y1="0" x2="108.7" y2="75.5" stroke="#ececec" stroke-width="4"/>
<polygon points="16.9,57.4 67.2,57.4 86.1,18.5 36.6,18.5" fill="none" stroke="#ececec" stroke-width="4" stroke-linejoin="miter"/>
<text x="0" y="0" transform="translate(122,59) scale(0.62,1)" font-family="Liberation Sans" font-size="62" fill="#ececec" stroke="#ececec" stroke-width="1.3">.6</text>
</g>
<g transform="matrix(0.86603,0.5,-0.86603,0.5,2322,1323.2)">
<rect x="0" y="0" width="254.5" height="78.2" fill="none" stroke="#ececec" stroke-width="3.6"/>
<line x1="127.5" y1="0" x2="127.5" y2="78.2" stroke="#ececec" stroke-width="3.6"/>
<polygon points="20.6,58 78.6,58 102.6,19 43.4,19" fill="none" stroke="#ececec" stroke-width="3.6" stroke-linejoin="miter"/>
<text x="0" y="0" transform="translate(143,60) scale(0.85,1)" font-family="Liberation Sans" font-size="58" fill="#ececec" stroke="#ececec" stroke-width="1.1">.500</text>
</g>
<g transform="matrix(0.86603,0.5,-0.86603,0.5,2681.8,1113.6)">
<rect x="0" y="0" width="140.3" height="44.2" fill="none" stroke="#ececec" stroke-width="2.2"/>
<line x1="70.4" y1="0" x2="70.4" y2="44.2" stroke="#ececec" stroke-width="2.2"/>
<polygon points="11.4,32.8 43.4,32.8 56.6,10.5 23.9,10.5" fill="none" stroke="#ececec" stroke-width="2.2" stroke-linejoin="miter"/>
<text x="0" y="0" transform="translate(77,35) scale(0.85,1)" font-family="Liberation Sans" font-size="32" fill="#ececec" stroke="#ececec" stroke-width="0.6">.200</text>
</g>
</svg>
  <div class="a" style="left:2918.5px;top:1526px;width:119px;height:52px;border:2px solid #3b55a6;border-radius:26px"></div>
<svg width="3248" height="1992" style="left:0;top:0">
 <g fill="none" stroke="#4f74f5" stroke-width="2">
  <line x1="2944.5" y1="1540" x2="2944.5" y2="1564"/><line x1="2975.8" y1="1540" x2="2975.8" y2="1564"/><line x1="2944.5" y1="1552" x2="2975.8" y2="1552"/>
 </g>
 <circle cx="2960" cy="1687.5" r="80.8" fill="none" stroke="#3b55a6" stroke-width="2"/>
 <polyline points="3028.5,1614 3033.5,1619 3038.5,1614" fill="none" stroke="#f0f0f0" stroke-width="1.8"/>
 <g stroke-width="3.4" stroke-linecap="round">
  <line x1="2960" y1="1687.5" x2="2920.3" y2="1665" stroke="#c9c9c4"/>
  <line x1="2960" y1="1687.5" x2="2920.3" y2="1710.5" stroke="#c9c9c4"/>
  <line x1="2960" y1="1687.5" x2="2960" y2="1733.5" stroke="#c9c9c4"/>
  <line x1="2960" y1="1687.5" x2="2999.5" y2="1710.5" stroke="#e8706e"/>
  <line x1="2960" y1="1687.5" x2="2999.5" y2="1665" stroke="#6de27b"/>
  <line x1="2960" y1="1687.5" x2="2960" y2="1642.3" stroke="#6f8ae8"/>
 </g>
 <circle cx="2920.3" cy="1665" r="10.2" fill="#c9c9c4"/>
 <circle cx="2920.3" cy="1710.5" r="10.2" fill="#c9c9c4"/>
 <circle cx="2960" cy="1733.5" r="10.2" fill="#c9c9c4"/>
 <circle cx="2999.5" cy="1710.5" r="10.2" fill="#e8706e"/>
 <circle cx="2999.5" cy="1665" r="10.2" fill="#6de27b"/>
 <circle cx="2960" cy="1642.3" r="10.2" fill="#6f8ae8"/>
</svg>
<div class="t" style="left:2992px;top:1539px;font-size:26px;color:#4f74f5">in</div>


  <!-- ===== RIGHT BAR ===== -->
  <div class="a" style="left:3059px;top:153px;width:77px;height:1634px;background:#2c2c2c"></div>
  <div class="a" style="left:3058px;top:153px;width:1.5px;height:1634px;background:#464646"></div>
  <div class="a" style="left:3059.5px;top:154px;width:76.5px;height:72px;background:#7cf8a9"></div>
  <svg style="left:0;top:0" width="3248" height="1992">
    <g fill="none" stroke="#1a1a1a" stroke-width="2" stroke-linejoin="round">
      <path d="M3093.7,176 Q3094.7,186 3102.5,187 Q3094.7,188 3093.7,198 Q3092.7,188 3085,187 Q3092.7,186 3093.7,176 Z"/>
      <path d="M3105.7,192.5 Q3106.2,198 3111,198.8 Q3106.2,199.6 3105.7,204.5 Q3105.2,199.6 3100.5,198.8 Q3105.2,198 3105.7,192.5 Z"/>
    </g>
  </svg>

  <!-- ===== STATUS BAR ===== -->
  <div class="a" style="left:112px;top:1787px;width:3024px;height:57px;background:#2c2c2c"></div>
  <div class="a" style="left:112px;top:1786px;width:3024px;height:1.5px;background:#4a4a4a"></div>
  <svg width="3248" height="1992" style="left:0;top:0">
 <g fill="none" stroke="#9ae896" stroke-width="1.7" stroke-linecap="round">
  <path d="M132.8,1815 A21,21 0 0 1 163.2,1815"/>
  <path d="M137.6,1818.4 A14,14 0 0 1 157.8,1818.4"/>
 </g>
 <circle cx="147.8" cy="1820.8" r="3.1" fill="#9ae896"/>
 <g fill="none" stroke="#e8e8e8" stroke-width="1.9">
  <path d="M206.8,1830 V1804.6 H233 V1830"/>
  <line x1="206.8" y1="1811.3" x2="233" y2="1811.3"/>
  <rect x="214.8" y="1809.3" width="4.4" height="3.8"/>
  <line x1="217" y1="1813.1" x2="217" y2="1816.4"/>
  <rect x="210.8" y="1822.8" width="18.6" height="3.5"/>
  <line x1="206.8" y1="1826.3" x2="233" y2="1826.3"/>
  <!-- stopwatch -->
  <circle cx="563.9" cy="1816.6" r="10"/>
  <line x1="563.9" y1="1806.6" x2="563.9" y2="1803.5"/>
  <line x1="560.5" y1="1803.5" x2="567.3" y2="1803.5"/>
  <line x1="564" y1="1816.5" x2="568.5" y2="1811"/>
  <!-- sliders -->
  <line x1="626" y1="1806.4" x2="628" y2="1806.4"/><line x1="633" y1="1806.4" x2="646" y2="1806.4"/>
  <line x1="626" y1="1815.9" x2="636" y2="1815.9"/><line x1="641" y1="1815.9" x2="646" y2="1815.9"/>
  <line x1="626" y1="1824.5" x2="633.6" y2="1824.5"/><line x1="638.6" y1="1824.5" x2="646" y2="1824.5"/>
  <circle cx="630.5" cy="1806.4" r="2.4"/><circle cx="638.5" cy="1815.9" r="2.4"/><circle cx="636.1" cy="1824.5" r="2.4"/>
 </g>
</svg>
<div class="t" style="left:272px;top:1805px;font-size:25px;color:#e6e6e6">v0.0.0</div>
<div class="t" style="left:374px;top:1805px;font-size:25.5px;color:#e6e6e6">dev.zoo.dev</div>
<div class="t" style="left:673px;top:1805px;font-size:25px;color:#e6e6e6">Settings</div>
<div class="t" style="left:796px;top:1803.5px;font-family:'Liberation Mono';font-size:24px;color:#7cf8a9">20</div>
<div class="a" style="left:841px;top:1809.5px;width:72px;height:13px;border-radius:7px;background:#1a1a1a"></div>
<div class="a" style="left:843px;top:1811.5px;width:68px;height:9px;border-radius:5px;background:#7cf8a9"></div>
<div class="t" style="left:2906px;top:1803px;font-size:25.5px;letter-spacing:0.2px;color:#e6e6e6">No selection</div>
<div class="t" style="left:3092px;top:1803px;font-size:25px;color:#e6e6e6">?</div>

</div>
<div id="winborder"></div>
</body></html>
